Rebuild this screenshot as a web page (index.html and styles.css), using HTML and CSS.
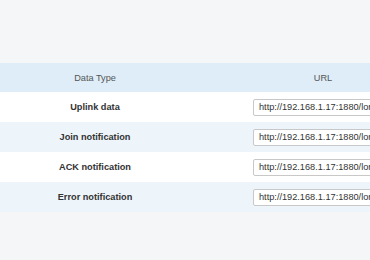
FILE: index.html
```html
<!DOCTYPE html>
<html>

<head>
    <title>HTTP Integration</title>
    <meta name="viewport" content="width=device-width, initial-scale=1.0">
    <link rel="stylesheet" href="styles.css">
</head>

<body>
    <div class="container">
        <table class="url-table">
            <thead>
                <tr>
                    <th class="type-col">Data Type</th>
                    <th>URL</th>
                </tr>
            </thead>
            <tbody>
                <tr>
                    <td class="type-col">Uplink data</td>
                    <td><input type="text" value="http://192.168.1.17:1880/lora/uplink"></td>
                </tr>
                <tr>
                    <td class="type-col">Join notification</td>
                    <td><input type="text" value="http://192.168.1.17:1880/lora/join"></td>
                </tr>
                <tr>
                    <td class="type-col">ACK notification</td>
                    <td><input type="text" value="http://192.168.1.17:1880/lora/ack"></td>
                </tr>
                <tr>
                    <td class="type-col">Error notification</td>
                    <td><input type="text" value="http://192.168.1.17:1880/lora/error"></td>
                </tr>
            </tbody>
        </table>
    </div>
</body>

</html>
```
FILE: styles.css
```css
body {
    font-family: "Liberation Sans", Arial, sans-serif;
    font-size: 9.2px;
    background-color: #f4f6f7;
    margin: 0;
    padding: 0;
}

/* the table is wider than the window, only its left part shows */
.container {
    padding-top: 63px;
    width: 100%;
    overflow: hidden;
}

.url-table {
    width: 456px;
    border-collapse: collapse;
    table-layout: fixed;
}

.url-table th,
.url-table td {
    padding: 0;
    text-align: center;
    height: 30px;
}

.type-col {
    width: 190px;
}

.url-table th {
    background-color: #deedf8;
    color: #555;
    font-weight: normal;
    height: 29px;
}

.url-table td {
    color: #333;
    font-weight: bold;
}

.url-table tbody tr {
    background-color: #fff;
}

.url-table tbody tr:nth-child(even) {
    background-color: #eef5fa;
}

.url-table input[type="text"] {
    box-sizing: border-box;
    width: 140px;
    height: 17px;
    padding: 0 5px;
    border: 1px solid #c8c8c8;
    border-radius: 2px;
    background-color: #fff;
    color: #333;
    font-family: "Liberation Sans", Arial, sans-serif;
    font-size: 9.2px;
    vertical-align: middle;
}
```
